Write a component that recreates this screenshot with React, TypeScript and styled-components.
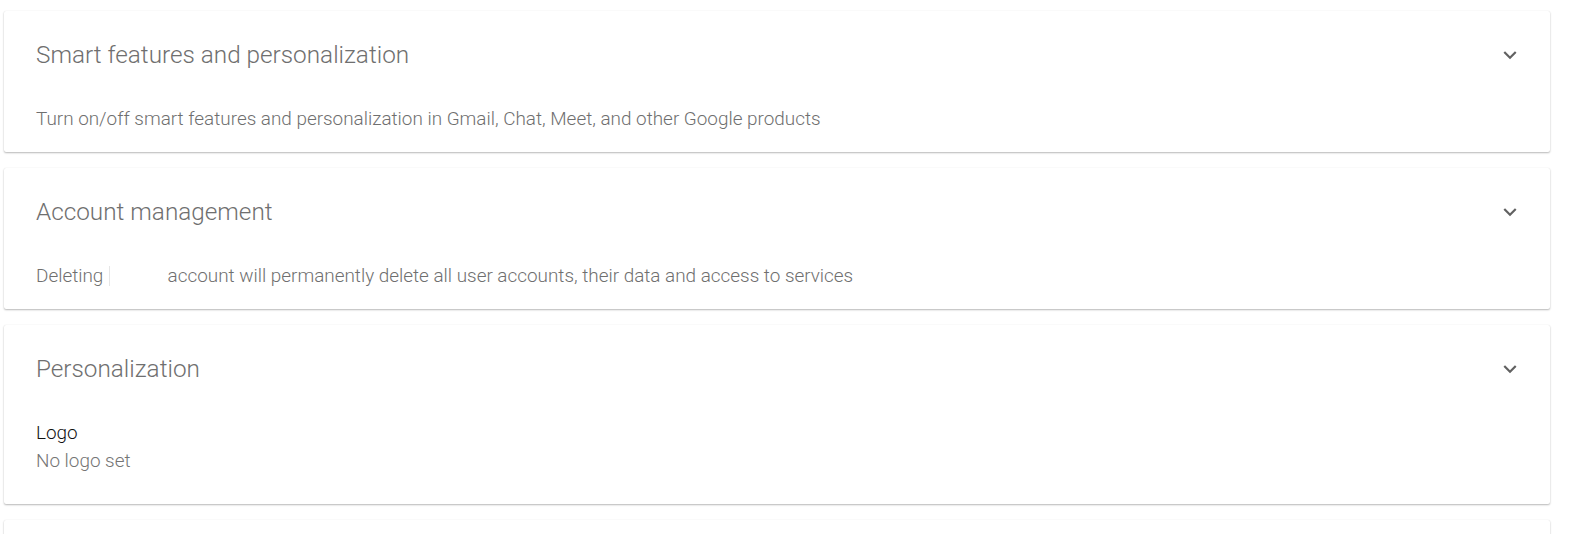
import React from "react";
import styled, { createGlobalStyle } from "styled-components";

const GlobalStyle = createGlobalStyle`
  html, body {
    margin: 0;
    padding: 0;
    background: #ffffff;
    font-family: Roboto, "Liberation Sans", Arial, sans-serif;
  }
`;

const Page = styled.div`
  display: flex;
  flex-direction: column;
  gap: 16px;
  padding: 11px 22px 0 4px;
`;

const Card = styled.section`
  background: #ffffff;
  border-radius: 2px;
  box-shadow: 0 1px 2px rgba(0, 0, 0, 0.28), 0 0 1px rgba(0, 0, 0, 0.1);
`;

const Header = styled.div`
  height: 87px;
  display: flex;
  align-items: center;
  justify-content: space-between;
  padding: 0 27px 0 32px;
`;

const Title = styled.h2`
  margin: 0;
  font-size: 24.3px;
  font-weight: 300;
  color: #6f6f6f;
  line-height: 28px;
`;

const Chevron = styled.svg`
  width: 26px;
  height: 26px;
  fill: #616161;
`;

const Body = styled.div<{ $bottom?: number }>`
  padding: 11px 32px ${(p) => p.$bottom ?? 23}px;
`;

const Description = styled.p`
  margin: 0;
  font-size: 18.9px;
  font-weight: 300;
  line-height: 20px;
  color: #6f6f6f;
`;

const Redacted = styled.span`
  display: inline-block;
  width: 53px;
  height: 20px;
  vertical-align: -4px;
  margin-left: 1px;
  border-left: 1px solid #e6e6e6;
`;

const FieldLabel = styled.div`
  font-size: 18.9px;
  font-weight: 300;
  line-height: 20px;
  color: #111111;
`;

const FieldValue = styled.div`
  margin-top: 8px;
  font-size: 18.9px;
  font-weight: 300;
  line-height: 20px;
  color: #757575;
`;

function ExpandIcon() {
  return (
    <Chevron viewBox="0 0 24 24">
      <path d="M16.59 8.59L12 13.17 7.41 8.59 6 10l6 6 6-6z" />
    </Chevron>
  );
}

function Panel({ title, children, bottom }: { title: string; children?: React.ReactNode; bottom?: number }) {
  return (
    <Card>
      <Header>
        <Title>{title}</Title>
        <ExpandIcon />
      </Header>
      {children && <Body $bottom={bottom}>{children}</Body>}
    </Card>
  );
}

export default function App() {
  return (
    <>
      <GlobalStyle />
      <Page>
        <Panel title="Smart features and personalization">
          <Description>
            Turn on/off smart features and personalization in Gmail, Chat, Meet, and other Google products
          </Description>
        </Panel>
        <Panel title="Account management">
          <Description>
            Deleting <Redacted /> account will permanently delete all user accounts, their data and access to services
          </Description>
        </Panel>
        <Panel title="Personalization" bottom={33}>
          <FieldLabel>Logo</FieldLabel>
          <FieldValue>No logo set</FieldValue>
        </Panel>
        <Panel title="Security" />
      </Page>
    </>
  );
}
